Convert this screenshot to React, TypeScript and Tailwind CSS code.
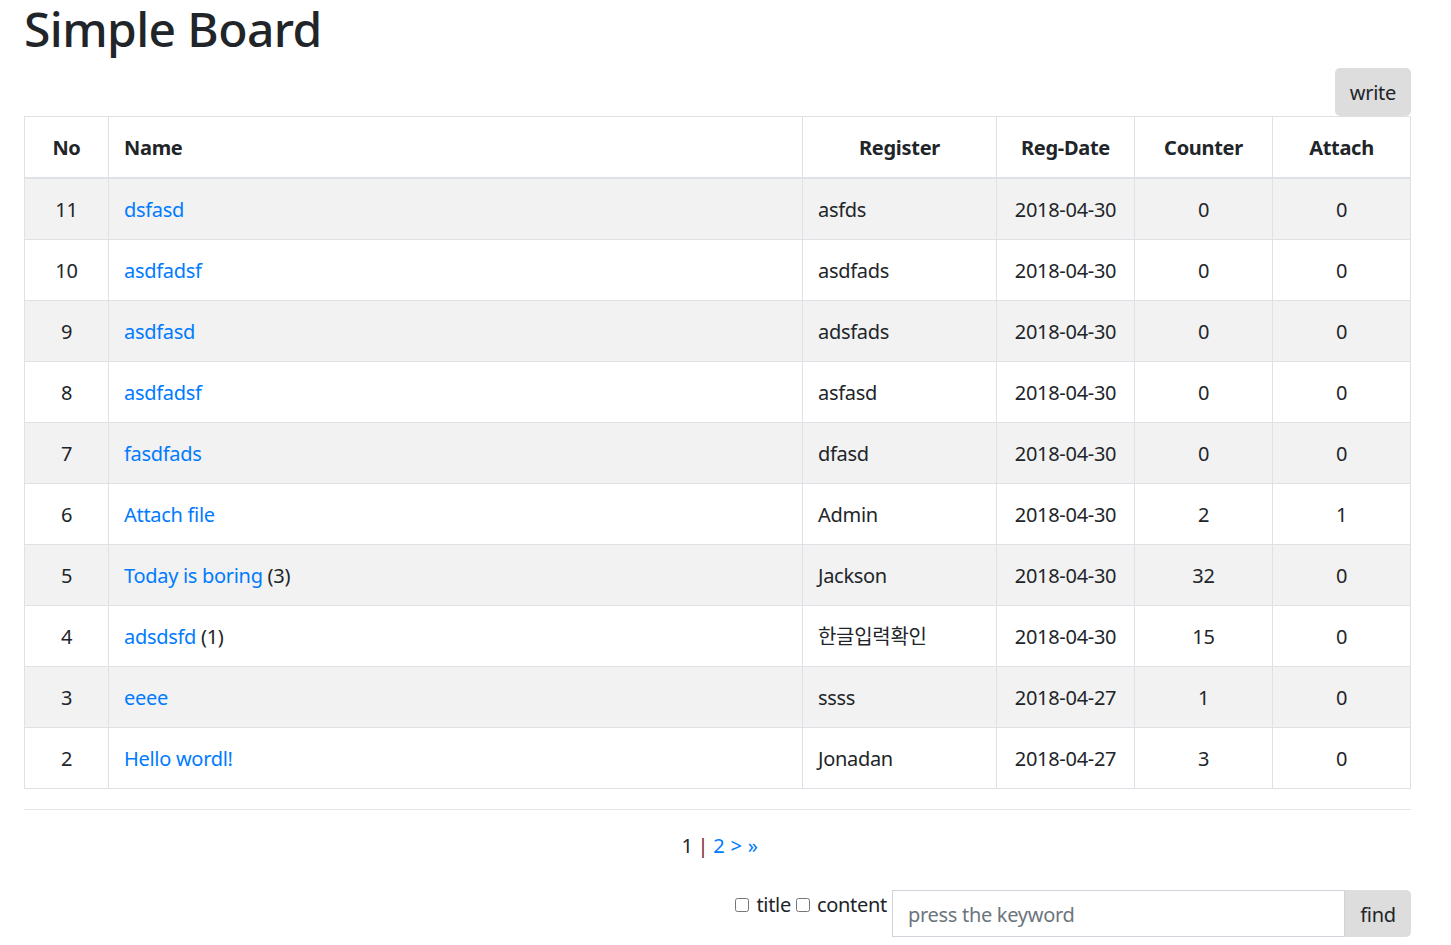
import React from "react";

type Post = {
  no: number;
  name: string;
  replies?: number;
  register: string;
  date: string;
  counter: number;
  attach: number;
};

const posts: Post[] = [
  { no: 11, name: "dsfasd", register: "asfds", date: "2018-04-30", counter: 0, attach: 0 },
  { no: 10, name: "asdfadsf", register: "asdfads", date: "2018-04-30", counter: 0, attach: 0 },
  { no: 9, name: "asdfasd", register: "adsfads", date: "2018-04-30", counter: 0, attach: 0 },
  { no: 8, name: "asdfadsf", register: "asfasd", date: "2018-04-30", counter: 0, attach: 0 },
  { no: 7, name: "fasdfads", register: "dfasd", date: "2018-04-30", counter: 0, attach: 0 },
  { no: 6, name: "Attach file", register: "Admin", date: "2018-04-30", counter: 2, attach: 1 },
  { no: 5, name: "Today is boring", replies: 3, register: "Jackson", date: "2018-04-30", counter: 32, attach: 0 },
  { no: 4, name: "adsdsfd", replies: 1, register: "한글입력확인", date: "2018-04-30", counter: 15, attach: 0 },
  { no: 3, name: "eeee", register: "ssss", date: "2018-04-27", counter: 1, attach: 0 },
  { no: 2, name: "Hello wordl!", register: "Jonadan", date: "2018-04-27", counter: 3, attach: 0 },
];

const cell = "border border-[#dee2e6] px-[15px] pt-[16px] pb-[14px] leading-[30px]";

const App: React.FC = () => {
  return (
    <div
      className="min-h-screen bg-white text-[20px] text-[#212529] tracking-[-0.3px]"
      style={{ fontFamily: '"Noto Sans", "Noto Sans CJK KR", sans-serif' }}
    >
      <div className="ml-[24px] w-[1387px]">
        <h1 className="m-0 text-[48px] font-medium leading-[58px] tracking-[-0.6px]">Simple Board</h1>

        <div className="flex justify-end mt-[10px]">
          <button className="h-[48px] rounded-[5px] bg-[#dddddd] px-[15px] pt-[1px] text-[20px] leading-[30px]">
            write
          </button>
        </div>

        <table className="w-full border-collapse table-fixed">
          <colgroup>
            <col className="w-[84px]" />
            <col className="w-[694px]" />
            <col className="w-[194px]" />
            <col className="w-[138px]" />
            <col className="w-[138px]" />
            <col className="w-[138px]" />
          </colgroup>
          <thead>
            <tr className="font-bold">
              <th className={`${cell} border-b-2 text-center`}>No</th>
              <th className={`${cell} border-b-2 text-left`}>Name</th>
              <th className={`${cell} border-b-2 text-center`}>Register</th>
              <th className={`${cell} border-b-2 text-center`}>Reg-Date</th>
              <th className={`${cell} border-b-2 text-center`}>Counter</th>
              <th className={`${cell} border-b-2 text-center`}>Attach</th>
            </tr>
          </thead>
          <tbody>
            {posts.map((p, i) => (
              <tr key={p.no} className={i % 2 === 0 ? "bg-[#f2f2f2]" : "bg-white"}>
                <td className={`${cell} text-center`}>{p.no}</td>
                <td className={cell}>
                  <a className="text-[#007bff]">{p.name}</a>
                  {p.replies !== undefined && <span> ({p.replies})</span>}
                </td>
                <td className={cell}>{p.register}</td>
                <td className={`${cell} text-center`}>{p.date}</td>
                <td className={`${cell} text-center`}>{p.counter}</td>
                <td className={`${cell} text-center`}>{p.attach}</td>
              </tr>
            ))}
          </tbody>
        </table>

        <hr className="mt-[20px] border-0 border-t border-[#e5e5e5]" />

        <div className="mt-[21px] flex justify-center leading-[30px]">
          <span className="ml-[4px]">1</span>
          <span className="mx-[5px] text-[#7b1f1f]">|</span>
          <a className="text-[#007bff]">2</a>
          <a className="ml-[6px] text-[#007bff]">&gt;</a>
          <a className="ml-[6px] text-[#007bff]">»</a>
        </div>

        <div className="mt-[29px] flex items-start justify-end">
          <label className="flex items-center leading-[30px]">
            <input type="checkbox" className="mr-[7px] h-[14px] w-[14px]" />
            <span>title</span>
          </label>
          <label className="ml-[5px] flex items-center leading-[30px]">
            <input type="checkbox" className="mr-[7px] h-[14px] w-[14px]" />
            <span>content</span>
          </label>
          <input
            type="text"
            placeholder="press the keyword"
            className="ml-[5px] h-[47px] w-[453px] border border-[#ced4da] px-[15px] pt-[2px] text-[20px] leading-[30px] placeholder-[#6c757d] outline-none"
          />
          <button className="h-[47px] w-[66px] rounded-r-[5px] bg-[#dddddd] pt-[2px] text-[20px] leading-[30px]">
            find
          </button>
        </div>
      </div>
    </div>
  );
};

export default App;
